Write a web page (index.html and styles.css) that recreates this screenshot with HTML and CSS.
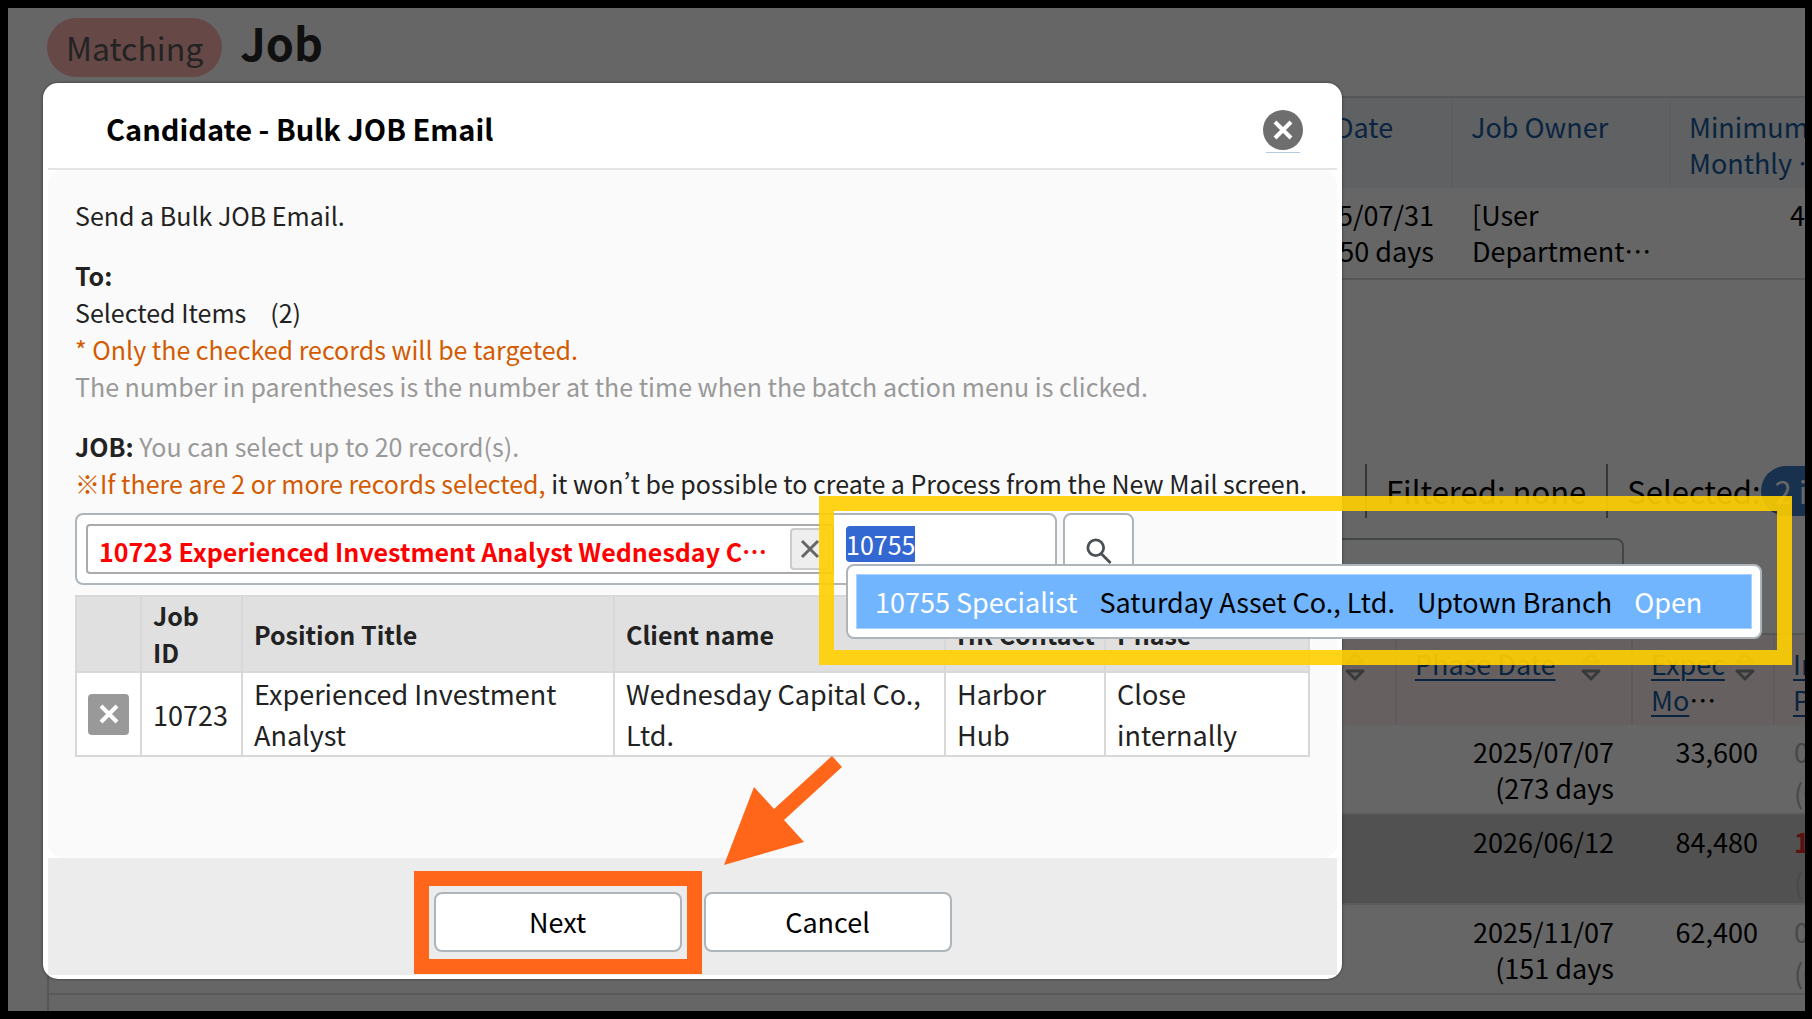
FILE: index.html
```html
<!DOCTYPE html>
<html lang="ja">
<head>
<meta charset="utf-8">
<title>Candidate - Bulk JOB Email</title>
<link rel="stylesheet" href="styles.css">
</head>
<body>
<div class="frame">
  <main class="page">
    <header class="page-head">
      <span class="badge">Matching</span>
      <h1 class="page-title">Job</h1>
    </header>

    <table class="grid summary">
      <colgroup><col class="c-lead"><col class="c-date"><col class="c-owner"><col class="c-rest"></colgroup>
      <thead>
        <tr><th></th><th class="date-head">Date</th><th>Job Owner</th><th>Minimum<br>Monthly <span class="dots">…</span></th></tr>
      </thead>
      <tbody>
        <tr><td></td><td class="num">2025/07/31<br>(250 days</td><td>[User<br>Department<span class="dots">…</span></td><td class="amount">400,000</td></tr>
      </tbody>
    </table>

    <div class="status">
      <span class="status-item">Display</span>
      <span class="status-item">Filtered: none</span>
      <span class="status-item">Selected:<span class="count">2 items</span></span>
    </div>
    <div class="filter-box"></div>

    <div class="results-wrap">
    <table class="grid results">
      <colgroup><col class="c-wide"><col class="c-phase"><col class="c-exp"><col class="c-rest"></colgroup>
      <thead>
        <tr>
          <th><span class="sort"><svg viewBox="0 0 20 30"><path d="M2 10 10 2l8 8zM2 19h16l-8 8z"/></svg></span></th>
          <th><span class="head-cell"><a href="#">Phase Date</a><svg viewBox="0 0 20 30"><path d="M2 10 10 2l8 8zM2 19h16l-8 8z"/></svg></span></th>
          <th><span class="head-cell tight"><span><a href="#">Expec<br>Mo</a><span class="dots">…</span></span><svg viewBox="0 0 20 30"><path d="M2 10 10 2l8 8zM2 19h16l-8 8z"/></svg></span></th>
          <th><a href="#">Interview<br>Process</a></th>
        </tr>
      </thead>
      <tbody>
        <tr><td></td><td class="num">2025/07/07<br>(273 days</td><td class="num sum">33,600</td><td class="faint">0<br>(0)</td></tr>
        <tr class="picked"><td></td><td class="num">2026/06/12</td><td class="num sum">84,480</td><td class="faint"><b class="alert">1</b><br>(1)</td></tr>
        <tr><td></td><td class="num">2025/11/07<br>(151 days</td><td class="num sum">62,400</td><td class="faint">0<br>(0)</td></tr>
      </tbody>
    </table>
    </div>
  </main>

  <div class="shade"></div>

  <section class="modal" role="dialog" aria-labelledby="dialog-title">
    <header class="modal-head">
      <h2 class="modal-title" id="dialog-title">Candidate - Bulk JOB Email</h2>
      <button class="close" type="button" aria-label="Close">
        <svg viewBox="0 0 40 44"><circle cx="20" cy="20" r="20" fill="#6e6e6e"/><path d="M12 12l16 16M28 12L12 28" stroke="#fff" stroke-width="4"/><path d="M3 42.500h34" stroke="#b4cae0"/></svg>
      </button>
    </header>

    <div class="modal-body">
      <p class="para">Send a Bulk JOB Email.</p>
      <p class="para"><b>To:</b><br>
        Selected Items<span class="total">(2)</span><br>
        <span class="warn">* Only the checked records will be targeted.</span><br>
        <span class="muted">The number in parentheses is the number at the time when the batch action menu is clicked.</span></p>
      <p class="para-last"><label for="job"><b class="dark">JOB:</b></label> <span class="muted">You can select up to 20 record(s).</span><br>
        <span class="warn">※If there are 2 or more records selected,</span> it won’t be possible to create a Process from the New Mail screen.</p>

      <div class="picker">
        <div class="picker-field">
          <div class="tag">
            <span class="tag-text">10723 Experienced Investment Analyst Wednesday C<span class="dots">…</span></span>
            <button class="tag-remove" type="button" aria-label="Remove"><svg viewBox="0 0 20 20"><path d="M2 2l16 16M18 2L2 18"/></svg></button>
          </div>
          <input class="query" id="job" type="text" value="10755">
        </div>
        <button class="search" type="button" aria-label="Search"><svg viewBox="0 0 28 28"><circle cx="10.500" cy="10.500" r="8.500"/><path d="M16.500 17l10 10"/></svg></button>
        <div class="suggest">
          <div class="option"><span>10755 Specialist</span><span class="ink">Saturday Asset Co., Ltd.</span><span class="ink">Uptown Branch</span><span>Open</span></div>
        </div>
        <div class="mark-yellow"></div>
      </div>

      <table class="jobs">
        <colgroup><col class="j-act"><col class="j-id"><col class="j-title"><col class="j-client"><col class="j-hr"><col></colgroup>
        <thead><tr><th></th><th>Job<br>ID</th><th>Position Title</th><th>Client name</th><th class="nowrap">HR Contact</th><th>Phase</th></tr></thead>
        <tbody><tr>
          <td class="act"><button class="row-remove" type="button" aria-label="Remove"><svg viewBox="0 0 20 20"><path d="M2 2l16 16M18 2L2 18"/></svg></button></td>
          <td>10723</td><td>Experienced Investment Analyst</td><td>Wednesday Capital Co., Ltd.</td><td>Harbor Hub</td><td>Close internally</td>
        </tr></tbody>
      </table>
    </div>

    <footer class="modal-foot">
      <div class="next-wrap">
        <button class="btn" type="button">Next</button>
        <div class="mark-orange"></div>
        <svg class="arrow" viewBox="0 0 120 110"><path d="M1 109 31 31 51 53 109 0 119 11 61 64 81 86z"/></svg>
      </div>
      <button class="btn" type="button">Cancel</button>
    </footer>
  </section>
</div>
</body>
</html>
```
FILE: styles.css
```css
* { box-sizing: border-box; }
body {
  margin: 0;
  background: #000;
  font-family: "Noto Sans CJK JP", "Noto Sans", sans-serif;
  font-size: 27px;
  line-height: 36px;
  color: #000;
}
button, input { font: inherit; margin: 0; padding: 0; }
h1, h2, p { margin: 0; }
.dots { font-family: "Noto Sans CJK TC", "Noto Sans CJK JP", sans-serif; }

.frame {
  position: relative;
  margin: 8px 7px 8px 8px;
  height: calc(100vh - 16px);
  overflow: hidden;
  background: #fff;
}
.shade { position: absolute; inset: 0; background: rgba(0, 0, 0, .6); }

/* Page behind the dialog */
.page { padding: 10px 0 0 39px; }
.page-head { display: flex; align-items: flex-start; gap: 18px; height: 78px; }
.badge {
  padding: 0 19px;
  border-radius: 30px;
  background: #ffb6af;
  color: #585858;
  font-size: 32px;
  line-height: 59px;
}
.page-title { font-size: 45px; line-height: 48px; color: #2a2a2a; }

.grid { table-layout: fixed; width: 1900px; border-collapse: separate; border-spacing: 0; }
.grid th { font-weight: 400; text-align: left; vertical-align: top; padding: 11px 18px 7px; }
.grid td { vertical-align: top; padding: 9px 19px; }
.grid .num { text-align: right; padding-right: 19px; }
.grid .sum { padding-right: 17px; }
.c-lead { width: 1173px; }
.c-date { width: 233px; }
.c-owner { width: 218px; }

.summary { border-top: 2px solid #d4d6d8; border-bottom: 2px solid #d4d6d8; }
.summary th { background: #eef3f6; color: #1a5aa0; border-right: 2px solid #e6eaee; }
.summary .date-head { padding-left: 115px; }
.summary .amount { padding-left: 119px; }

.status { display: flex; margin: 184px 0 0 1201px; font-size: 31px; line-height: 54px; white-space: nowrap; }
.status-item { display: flex; align-items: center; padding: 0 20px 0 19px; border-left: 2px solid #888; }
.status-item:first-child { width: 117px; justify-content: flex-end; border: 0; padding: 0 23px 0 0; }
.count { border-radius: 25px; background: #3c7ac2; color: #fff; line-height: 50px; padding: 0 14px; }
.filter-box { width: 1577px; height: 64px; margin-top: 20px; border: 2px solid #a8b0b0; border-radius: 8px; }

.results-wrap { margin-top: 31px; height: 400px; border-left: 2px solid #d8d8d8; }
.results { border-top: 2px solid #d8d4d4; }
.results th { height: 90px; background: #fff2f0; border-right: 2px solid #e6e6ea; }
.results td { height: 90px; border-bottom: 2px solid #e0e0e0; padding-bottom: 7px; }
.results a { color: #1a5aa0; text-underline-offset: 4px; text-decoration-thickness: 2px; }
.results tr.picked td { background: #cbcbcb; }
.results svg { width: 20px; height: 30px; flex: none; margin-top: 6px; fill: none; stroke: #8a8f94; stroke-width: 3; stroke-linejoin: round; }
.c-wide { width: 1348px; }
.c-phase { width: 236px; }
.c-exp { width: 142px; }
.head-cell { display: flex; justify-content: space-between; padding-right: 12px; }
.head-cell.tight { padding-right: 0; }
.sort { display: flex; justify-content: flex-end; padding-right: 12px; }
.results .faint { color: #b4b4b4; line-height: 41px; padding-top: 6px; padding-bottom: 0; }
.alert { color: #e52a2a; }

/* Dialog */
.modal {
  position: absolute;
  top: 75px;
  left: 35px;
  right: 463px;
  padding: 5px 5px 4px;
  border-radius: 15px;
  background: #fff;
  box-shadow: 0 0 3px rgba(0, 0, 0, .5);
  color: #222;
}
.modal-head {
  display: flex;
  align-items: center;
  justify-content: space-between;
  height: 82px;
  padding: 0 34px 0 58px;
  border-bottom: 2px solid #e4e4e4;
}
.modal-title { font-size: 29px; line-height: 40px; color: #000; }
.close { width: 40px; height: 44px; border: 0; background: none; margin-top: 8px; }
.close svg { display: block; fill: none; }

.modal-body {
  padding: 27px 27px 101px;
  border-radius: 15px;
  background: #fafafa;
  font-size: 25px;
  line-height: 37px;
}
.para { margin-bottom: 23px; }
.para-last { margin-bottom: 11px; white-space: nowrap; }
.total { margin-left: 24px; }
.warn { color: #d35a00; }
.muted { color: #999; }
.dark { color: #222; }

.picker { position: relative; display: flex; gap: 6px; margin-bottom: 10px; }
.picker-field {
  display: flex;
  width: 982px;
  height: 72px;
  padding: 9px;
  gap: 12px;
  border: 2px solid #adb5ba;
  border-radius: 8px;
  background: #fff;
}
.tag {
  display: flex;
  align-items: center;
  justify-content: space-between;
  width: 748px;
  height: 50px;
  padding: 0 2px 0 11px;
  border: 2px solid #aaa;
  border-radius: 4px;
}
.tag-text { color: #f00; font-weight: 700; white-space: nowrap; padding-top: 4px; }
.tag-remove { width: 40px; height: 42px; border: 2px solid #ccc; border-radius: 4px; background: #eee; }
.tag-remove svg { width: 20px; fill: none; stroke: #666; stroke-width: 3; display: block; margin: 0 auto; }
.query {
  width: 69px;
  height: 36px;
  margin-top: 2px;
  border: 0;
  border-radius: 4px 0 0 4px;
  background: #3367d1;
  color: #fff;
}
.search { width: 71px; height: 72px; border: 2px solid #adb5ba; border-radius: 8px; background: #fff; }
.search svg { display: block; width: 26px; margin: 4px auto 0; fill: none; stroke: #4a5056; stroke-width: 3; }
.suggest {
  position: absolute;
  top: 51px;
  left: 771px;
  width: 916px;
  padding: 8px;
  border: 2px solid #adb5ba;
  border-radius: 8px;
  background: #fff;
}
.option {
  display: flex;
  gap: 22px;
  padding: 0 18px;
  border: 1px solid #a8d2ff;
  background: #70b5fe;
  color: #fff;
  font-size: 27px;
  line-height: 53px;
  white-space: nowrap;
}
.ink { color: #000; }
.mark-yellow { position: absolute; top: -17px; left: 744px; width: 973px; height: 169px; border: 15px solid rgba(255, 207, 0, .91); pointer-events: none; }

.jobs { width: 1235px; table-layout: fixed; border-collapse: collapse; }
.jobs th, .jobs td { border: 2px solid #d8d8d8; padding: 0 11px; text-align: left; vertical-align: middle; }
.jobs th { background: #e0e0e0; }
.jobs td { background: #fff; font-size: 27px; line-height: 41px; }
.jobs .nowrap { white-space: nowrap; }
.jobs .act { padding: 0; }
.j-act { width: 65px; }
.j-id { width: 101px; }
.j-title { width: 372px; }
.j-client { width: 331px; }
.j-hr { width: 160px; }
.row-remove { display: block; width: 41px; height: 41px; margin: 0 auto; border: 0; border-radius: 4px; background: #999; }
.row-remove svg { display: block; width: 20px; margin: 0 auto; fill: none; stroke: #fff; stroke-width: 4; }

.modal-foot { display: flex; justify-content: center; gap: 22px; padding: 34px 0 23px; background: #ececec; }
.btn { display: block; width: 248px; height: 60px; border: 2px solid #adb5ba; border-radius: 8px; background: #fff; color: #000; }
.next-wrap { position: relative; }
.mark-orange { position: absolute; inset: -21px -20px -22px; border: 15px solid #ff6619; pointer-events: none; }
.arrow { position: absolute; left: 289px; top: -136px; width: 120px; height: 110px; fill: #ff6619; }
```
